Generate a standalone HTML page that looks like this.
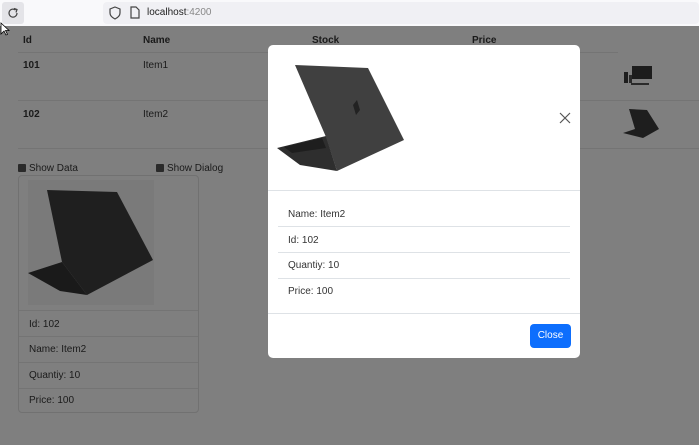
<!DOCTYPE html>
<html><head><meta charset="utf-8"><style>
*{box-sizing:border-box;margin:0;padding:0}
body{width:699px;height:445px;overflow:hidden;background:#7f7f7f;font-family:"Liberation Sans",sans-serif;font-size:10px;color:#1a1a1a;position:relative}
.bar{position:absolute;left:0;top:0;width:699px;height:26px;background:#f9f9fb}
.abs{position:absolute;white-space:nowrap}
.b{font-weight:bold}
.line{position:absolute;height:1px;background:#747474}
.mline{position:absolute;height:1px;background:#dee2e6}
.modal{position:absolute;left:268px;top:45px;width:312px;height:313px;background:#fff;border-radius:5px}
.cb{display:inline-block;width:8px;height:8px;background:#2a2a2a;border-radius:1px;vertical-align:-1px;margin-right:3px}
</style></head><body>
<div class="bar">
 <div class="abs" style="left:2px;top:2px;width:22px;height:22px;background:#e4e4e8;border-radius:3px"></div>
 <svg class="abs" style="left:7px;top:7px" width="12" height="12" viewBox="0 0 12 12"><path d="M10 6A4 4 0 1 1 8.5 3" fill="none" stroke="#444" stroke-width="1.2"/><path d="M7 1.5L10 2.5 9 5.5" fill="none" stroke="#444" stroke-width="1.2"/></svg>
 <div class="abs" style="left:103px;top:2px;width:596px;height:22px;background:#f0f0f4;border-radius:4px"></div>
 <svg class="abs" style="left:109px;top:6px" width="12" height="14" viewBox="0 0 12 14"><path d="M6 1L11 3V7C11 10 8 12 6 13 4 12 1 10 1 7V3Z" fill="none" stroke="#444" stroke-width="1.2"/></svg>
 <svg class="abs" style="left:130px;top:6px" width="10" height="13" viewBox="0 0 10 13"><path d="M1 1H6L9 4V12H1Z" fill="none" stroke="#444" stroke-width="1.2"/></svg>
 <div class="abs" style="left:147px;top:7px;font-size:10px;color:#222">localhost<span style="color:#888">:4200</span></div>
</div>
<div class="abs b" style="left:23px;top:35px">Id</div>
<div class="abs b" style="left:143px;top:35px">Name</div>
<div class="abs b" style="left:312px;top:35px">Stock</div>
<div class="abs b" style="left:472px;top:35px">Price</div>
<div class="line" style="left:18px;top:52px;width:600px"></div>
<div class="abs b" style="left:23px;top:60px">101</div>
<div class="abs" style="left:143px;top:60px">Item1</div>
<div class="line" style="left:18px;top:100px;width:681px"></div>
<div class="abs b" style="left:23px;top:109px">102</div>
<div class="abs" style="left:143px;top:109px">Item2</div>
<div class="line" style="left:18px;top:148px;width:681px"></div>
<svg class="abs" style="left:622px;top:64px" width="40" height="26" viewBox="0 0 40 26"><rect x="10" y="2" width="20" height="13" fill="#1d1d1d"/><rect x="2" y="8" width="4" height="11" fill="#1d1d1d"/><rect x="7" y="11" width="3" height="8" fill="#2a2a2a"/><rect x="9" y="19" width="18" height="2" fill="#2a2a2a"/></svg>
<svg class="abs" style="left:621px;top:107px" width="42" height="34" viewBox="0 0 42 34"><path d="M8 2L26 3 38 22 22 31 2 26 14 22Z" fill="#1e1e1e"/></svg>
<div class="abs" style="left:18px;top:163px"><span class="cb"></span>Show Data</div>
<div class="abs" style="left:156px;top:163px"><span class="cb"></span>Show Dialog</div>
<div class="abs" style="left:18px;top:175px;width:181px;height:238px;border:1px solid #717171;border-radius:4px"></div>
<div class="abs" style="left:28px;top:180px;width:126px;height:125px;background:#7a7a7a"></div>
<svg class="abs" style="left:0;top:160px" width="200" height="150" viewBox="0 160 200 150"><path d="M28 273L62 262 87 295 60 291Z" fill="#1a1a1a"/><path d="M47 190L117 192 153 260 87 295 62 262Z" fill="#1f1f1f"/></svg>
<div class="line" style="left:19px;top:310px;width:179px"></div>
<div class="line" style="left:19px;top:336px;width:179px"></div>
<div class="line" style="left:19px;top:362px;width:179px"></div>
<div class="line" style="left:19px;top:388px;width:179px"></div>
<div class="abs" style="left:29px;top:319px">Id: 102</div>
<div class="abs" style="left:29px;top:344px">Name: Item2</div>
<div class="abs" style="left:29px;top:370px">Quantiy: 10</div>
<div class="abs" style="left:29px;top:395px">Price: 100</div>
<div class="modal"></div>
<svg class="abs" style="left:268px;top:55px" width="150" height="125" viewBox="268 55 150 125"><path d="M277 148L326 136 337 171 300 165Z" fill="#2e2e2e"/><path d="M284 147L322 138 326 148 292 153Z" fill="#1e1e1e"/><path d="M295 65L368 68 404 140 337 171 326 137Z" fill="#404040"/><path d="M353 105L357 100 360 110 356 115Z" fill="#222"/></svg>
<svg class="abs" style="left:559px;top:112px" width="12" height="12" viewBox="0 0 12 12"><path d="M1 1L11 11M11 1L1 11" stroke="#555" stroke-width="1.2"/></svg>
<div class="mline" style="left:268px;top:190px;width:312px"></div>
<div class="abs" style="left:288px;top:209px;color:#333">Name: Item2</div>
<div class="mline" style="left:278px;top:226px;width:292px"></div>
<div class="abs" style="left:288px;top:235px;color:#333">Id: 102</div>
<div class="mline" style="left:278px;top:252px;width:292px"></div>
<div class="abs" style="left:288px;top:260px;color:#333">Quantiy: 10</div>
<div class="mline" style="left:278px;top:278px;width:292px"></div>
<div class="abs" style="left:288px;top:286px;color:#333">Price: 100</div>
<div class="mline" style="left:268px;top:313px;width:312px"></div>
<div class="abs" style="left:530px;top:324px;width:41px;height:24px;background:#0d6efd;border-radius:4px;color:#fff;text-align:center;line-height:24px">Close</div>
<svg class="abs" style="left:0;top:22px" width="10" height="14" viewBox="0 0 10 14"><path d="M1 1V12L4 9 6 13 7.5 12.3 5.5 8.5H9Z" fill="#fff" stroke="#000" stroke-width="0.8"/></svg>
</body></html>
